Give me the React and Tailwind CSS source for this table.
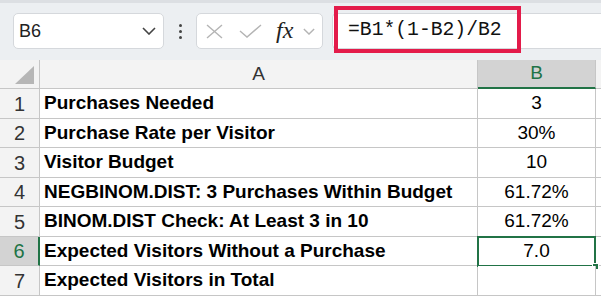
import React from 'react';

const rows = [
  { n: 1, a: 'Purchases Needed', b: '3', h: 'h-[30px]' },
  { n: 2, a: 'Purchase Rate per Visitor', b: '30%', h: 'h-[29px]' },
  { n: 3, a: 'Visitor Budget', b: '10', h: 'h-[30px]' },
  { n: 4, a: 'NEGBINOM.DIST: 3 Purchases Within Budget', b: '61.72%', h: 'h-[29px]' },
  { n: 5, a: 'BINOM.DIST Check: At Least 3 in 10', b: '61.72%', h: 'h-[30px]' },
  { n: 6, a: 'Expected Visitors Without a Purchase', b: '7.0', h: 'h-[29px]', active: true },
  { n: 7, a: 'Expected Visitors in Total', b: '', h: 'h-[30px]' }
];

const Chevron = ({ className }) => (
  <svg className={className} viewBox="0 0 14 8" fill="none">
    <polyline points="1,1 7,7 13,1" stroke="currentColor" strokeWidth="1.6" />
  </svg>
);

const FormulaBar = () => (
  <div className="h-[60px] bg-[#eceff2] border-t-[3px] border-[#dcdfe3] flex items-start pt-[10px] pl-[13px]">
    <div className="w-[151px] h-[36px] bg-white border border-[#d5d8dc] rounded-[5px] flex items-center justify-between pl-[5px] pr-[7px]">
      <span className="text-[18px] text-[#222]" style={{ fontFamily: '"Liberation Sans", Arial, sans-serif' }}>B6</span>
      <Chevron className="w-[14px] h-[8px] text-[#444]" />
    </div>
    <div className="w-[32px] h-[36px] flex flex-col items-center justify-center gap-[3px]">
      <span className="w-[3px] h-[3px] bg-[#444] rounded-full" />
      <span className="w-[3px] h-[3px] bg-[#444] rounded-full" />
      <span className="w-[3px] h-[3px] bg-[#444] rounded-full" />
    </div>
    <div className="w-[127px] h-[36px] bg-white border border-[#d5d8dc] rounded-[5px] flex items-center pl-[9px]">
      <svg className="w-[17px] h-[15px]" viewBox="0 0 17 15" fill="none">
        <line x1="1" y1="1" x2="16" y2="14" stroke="#b4b4b4" strokeWidth="1.4" />
        <line x1="16" y1="1" x2="1" y2="14" stroke="#b4b4b4" strokeWidth="1.4" />
      </svg>
      <svg className="w-[23px] h-[14px] ml-[16px]" viewBox="0 0 23 14" fill="none">
        <polyline points="1,7 8,13 22,1" stroke="#b4b4b4" strokeWidth="1.4" />
      </svg>
      <span
        className="ml-[14px] text-[24px] italic leading-none text-[#222] mb-[2px]"
        style={{ fontFamily: '"Liberation Serif", "Times New Roman", serif' }}
      >
        fx
      </span>
      <Chevron className="ml-[10px] w-[12px] h-[7px] text-[#b4b4b4]" />
    </div>
    <div className="relative flex-1 ml-[9px] h-[36px] bg-white border-y border-l border-[#d5d8dc] rounded-l-[5px] flex items-center pl-[15px]">
      <span
        className="text-[19.7px] text-[#111]"
        style={{ fontFamily: '"Liberation Mono", "DejaVu Sans Mono", monospace' }}
      >
        =B1*(1-B2)/B2
      </span>
      <div className="absolute left-[1px] top-[-8px] w-[187px] h-[47px] border-4 border-[#e31b4a]" />
    </div>
  </div>
);

const Grid = () => (
  <div className="text-[19px]" style={{ fontFamily: '"Liberation Sans", Arial, sans-serif' }}>
    <div className="flex h-[29px] bg-[#f3f3f3] border-b border-[#c6c6c6]">
      <div className="w-[40px] border-r border-[#c6c6c6] flex items-end justify-end pr-[5px] pb-[4px]">
        <div className="w-0 h-0 border-l-[19px] border-l-transparent border-b-[18px] border-b-[#b6b6b6]" />
      </div>
      <div className="w-[438px] border-r border-[#c6c6c6] flex items-center justify-center text-[#333]">A</div>
      <div className="w-[118px] bg-[#d3d3d3] border-r border-[#c6c6c6] border-b-2 border-b-[#217346] -mb-[1px] flex items-center justify-center text-[#217346]">B</div>
      <div className="flex-1" />
    </div>
    {rows.map(r => (
      <div key={r.n} className={`flex ${r.h}`}>
        <div
          className={`w-[40px] flex items-center justify-center border-b border-[#c6c6c6] text-[20px] ${
            r.active ? 'bg-[#d3d3d3] text-[#217346] border-r-2 border-r-[#217346]' : 'bg-[#f3f3f3] text-[#333] border-r border-r-[#c6c6c6]'
          }`}
        >
          {r.n}
        </div>
        <div className="w-[438px] bg-white border-r border-b border-[#c6c6c6] flex items-center pl-[4px] font-bold text-black whitespace-nowrap overflow-hidden">
          {r.a}
        </div>
        <div
          className={`relative w-[118px] bg-white flex items-center justify-center text-black ${
            r.active ? 'border-2 border-[#217346] -mt-[1px] -ml-[1px] w-[119px] h-[31px]' : 'border-r border-b border-[#c6c6c6]'
          }`}
        >
          {r.b}
          {r.active && <div className="absolute right-[-5px] bottom-[-5px] w-[7px] h-[7px] bg-[#217346] border border-white" />}
        </div>
        <div className="flex-1 bg-white border-b border-[#c6c6c6]" />
      </div>
    ))}
  </div>
);

export default function App() {
  return (
    <div className="w-[601px] h-[298px] overflow-hidden bg-white">
      <FormulaBar />
      <Grid />
    </div>
  );
}
